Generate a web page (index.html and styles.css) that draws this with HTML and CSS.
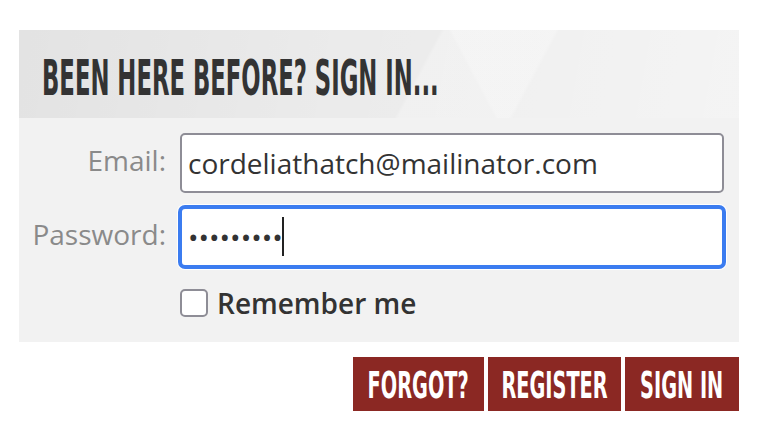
FILE: index.html
```html
<!DOCTYPE html>
<html>
	<head>
		<meta charset="utf-8">
		<title>Sign in</title>
		<link rel="stylesheet" href="styles.css">
	</head>
	<body>
		<div class='signin'>
			<div class='signinHead'>
				<h2><span class='squash'>BEEN HERE BEFORE? SIGN IN...</span></h2>
			</div>
			<form class='signinBody'>
				<div class='row'>
					<label for='email'>Email:</label>
					<input id='email' class='field' type='text' name='email' value='cordeliathatch@mailinator.com'>
				</div>
				<div class='row'>
					<label for='password'>Password:</label>
					<div class='fieldWrap'>
						<input id='password' class='field focused' type='password' name='password' value='secret123'>
						<span class='caret'></span>
					</div>
				</div>
				<div class='row remember'>
					<span></span>
					<label class='check'><input type='checkbox' name='remember'> Remember me</label>
				</div>
			</form>
			<div class='actions'>
				<a href='#' class='btn forgot'><span class='squash'>FORGOT?</span></a>
				<a href='#' class='btn register'><span class='squash'>REGISTER</span></a>
				<a href='#' class='btn go'><span class='squash'>SIGN IN</span></a>
			</div>
		</div>
	</body>
</html>
```

FILE: styles.css
```css
body{
	margin:0;
	background-color:#fff;
	font-family:"Open Sans", "Noto Sans", sans-serif;
}

.signin{
	width:720px;
	margin:30px 0 0 19px;
}

/* condensed display face */
.squash{
	display:inline-block;
	font-family:"Liberation Sans Narrow", "DejaVu Sans Condensed", sans-serif;
	font-weight:bold;
	white-space:nowrap;
}

.signinHead{
	height:88px;
	padding-left:23px;
	display:flex;
	align-items:center;
	overflow:hidden;
	background-color:#ebebeb;
	background-image:
		linear-gradient(118deg, rgba(255,255,255,0) 55%, rgba(255,255,255,0.25) 55.5%, rgba(255,255,255,0.25) 70%, rgba(255,255,255,0) 70.5%),
		linear-gradient(62deg, rgba(255,255,255,0) 62%, rgba(255,255,255,0.2) 62.5%),
		linear-gradient(100deg, rgba(0,0,0,0.035) 0%, rgba(0,0,0,0.015) 25%, rgba(255,255,255,0) 45%, rgba(255,255,255,0.3) 100%);
}
.signinHead h2{
	margin:6px 0 0 0;
	color:#333;
	font-size:49px;
	line-height:1;
	font-weight:normal;
}
.signinHead .squash{
	transform:scaleX(0.516);
	transform-origin:left center;
}

.signinBody{
	background-color:#f2f2f2;
	padding:15px 15px 20px 0;
	margin:0;
}

.row{
	display:grid;
	grid-template-columns:147px 544px;
	column-gap:14px;
	align-items:center;
	margin-bottom:14px;
}
.row label{
	text-align:right;
	color:#8a8a8a;
	font-size:28px;
	margin-top:-6px;
}

.field{
	box-sizing:border-box;
	width:544px;
	height:60px;
	border:2px solid #8e8d96;
	border-radius:5px;
	background-color:#fff;
	padding:0 6px;
	font-family:"Open Sans", "Noto Sans", sans-serif;
	font-size:28px;
	color:#333;
	outline:none;
}
.fieldWrap{
	position:relative;
}
.focused{
	border-color:#3b7cf0;
	box-shadow:0 0 0 2px #3b7cf0, 0 0 0 3px #fff;
}
.caret{
	position:absolute;
	left:102px;
	top:10px;
	width:2px;
	height:39px;
	background-color:#222;
}

.remember{
	margin:17px 0 0 0;
}
.row .check{
	display:flex;
	align-items:center;
	gap:9px;
	text-align:left;
	color:#333;
	font-weight:600;
	margin-top:0;
}
.check input{
	appearance:none;
	-webkit-appearance:none;
	box-sizing:border-box;
	width:28px;
	height:28px;
	margin:0;
	border:2px solid #8e8d96;
	border-radius:5px;
	background-color:#fff;
}

.actions{
	display:flex;
	justify-content:flex-end;
	gap:4px;
	margin-top:15px;
}
.btn{
	height:54px;
	display:flex;
	align-items:center;
	justify-content:center;
	overflow:hidden;
	background-color:#8b2823;
	color:#fff;
	text-decoration:none;
	font-size:37px;
}
.btn .squash{
	transform:scaleX(0.58);
	margin-top:2px;
}
.forgot{
	width:131px;
}
.register{
	width:133px;
}
.go{
	width:114px;
}
```
